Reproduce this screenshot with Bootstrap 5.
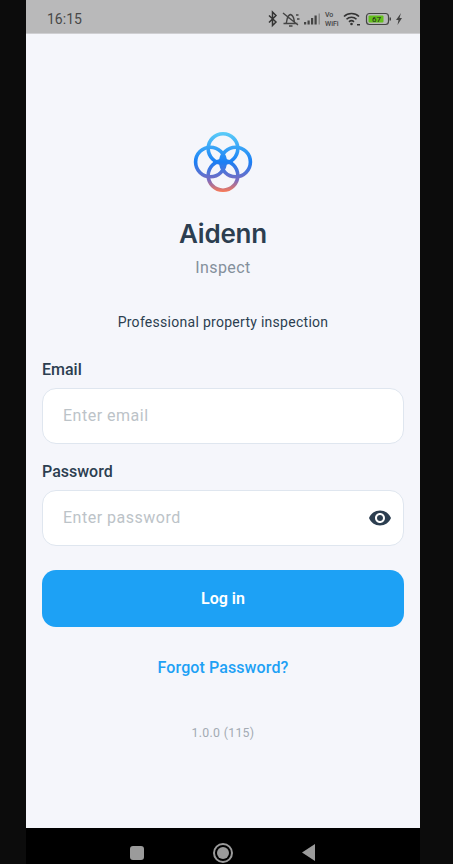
<!DOCTYPE html>
<html lang="en">
<head>
    <meta charset="UTF-8">
    <meta name="viewport" content="width=device-width, initial-scale=1.0">
    <title>Aidenn Inspect</title>
    <link href="https://cdn.jsdelivr.net/npm/bootstrap@5.3.0/dist/css/bootstrap.min.css" rel="stylesheet">
    <style>
        html, body { height: 100%; }
        body { background: #0c0c0c; font-family: Roboto, "Liberation Sans", sans-serif; overflow: hidden; }
        .phone { width: 394px; height: 864px; margin-left: 26px; }
        .status-strip { height: 34px; background: #b9b9ba; color: #484848; padding: 5px 18px 0 21px; font-size: 14px; border-bottom: 1px solid #cfcfd2; }
        .screen { height: 794px; background: #f5f6fb; padding: 98px 16px 0; color: #2c3e50; }
        .brand-mark { filter: blur(.4px); }
        .brand { font-family: Inter, sans-serif; font-size: 26px; font-weight: 600; line-height: 32px; margin-top: 26px; letter-spacing: -.2px; }
        .sub-brand { font-size: 16px; color: #84909b; line-height: 20px; margin-top: 8px; letter-spacing: .4px; }
        .tagline { font-size: 14px; line-height: 20px; margin-top: 34px; letter-spacing: .28px; }
        .login-form { margin-top: 28px; }
        .field-label { font-size: 16px; font-weight: 500; line-height: 20px; margin-bottom: 8px; display: block; }
        .field-box { height: 56px; border-radius: 14px; border: 1.5px solid #dfe6ef; background: #fff; color: #2c3e50; font-size: 16px; padding: 0 0 2px 20px; letter-spacing: .5px; box-shadow: none; }
        .field-box::placeholder { color: #bcc3c8; opacity: 1; }
        .pass-label { margin-top: 18px; }
        .eye-btn { right: 12px; top: 16px; line-height: 0; }
        .login-btn { height: 57px; background: #1da1f5; border: 0; border-radius: 14px; font-size: 16px; font-weight: 600; }
        .forgot { color: #1da1f5; font-size: 16px; font-weight: 500; line-height: 20px; margin-top: 31px; letter-spacing: .1px; }
        .version { color: #a3abb3; font-size: 12.3px; line-height: 16px; margin-top: 47px; letter-spacing: .3px; }
        .nav-strip { height: 36px; background: #000; padding-top: 15px; }
    </style>
</head>

<body>
<div class="phone">
    <div class="status-strip d-flex align-items-center justify-content-between">
        <span>16:15</span>
        <svg width="134" height="18" viewBox="0 -1 134 18" fill="none">
            <path d="M1 4.500l7 6.500-3.500 3.500V1l3.500 3.500L1 11.500" stroke="#333" stroke-width="1.500"/>
            <g stroke="#444" stroke-width="1.400">
                <path d="M15.500 12.500h14M18 12.500c1.500-2 0-7.500 4.500-9 4.500 1.500 3 7 4.500 9M21 15h3.500M15 2l15 12"/>
                <path d="M28 4h2.500M29 8h2.500"/>
            </g>
            <g fill="#444">
                <rect x="36" y="11" width="2.200" height="2.500"/>
                <rect x="39.500" y="9.500" width="2.200" height="4"/>
                <rect x="43" y="7" width="2.200" height="6.500"/>
                <rect x="46.500" y="4.500" width="2.200" height="9"/>
                <rect x="50.500" y="2.500" width="1.500" height="11" fill="#8a8a8a"/>
            </g>
            <text x="57" y="5.500" font-size="7" font-weight="500" fill="#444" font-family="Roboto, sans-serif">Vo</text>
            <text x="57" y="14.500" font-size="7" font-weight="500" fill="#444" font-family="Roboto, sans-serif">WiFi</text>
            <g fill="none" stroke="#333" stroke-width="1.600">
                <path d="M76 5.500c4-4 11-4 15 0"/>
                <path d="M78.500 8.200c2.700-2.700 7.300-2.700 10 0"/>
                <path d="M81 10.800c1.500-1.400 3.500-1.400 5 0"/>
            </g>
            <circle cx="83.500" cy="13" r="1.300" fill="#333"/>
            <rect x="89" y="13" width="3" height="1.500" fill="#333"/>
            <rect x="98.500" y="2.500" width="22" height="11" rx="3" stroke="#444" stroke-width="1.200"/>
            <rect x="100.500" y="4.500" width="15" height="7" rx="1" fill="#64c01c"/>
            <text x="104" y="11" font-size="8" fill="#222" font-family="Roboto, sans-serif">67</text>
            <rect x="121.500" y="6.500" width="1.500" height="3" fill="#444"/>
            <path d="M133 2l-5 7h2.500l-1 5 4.500-7h-2.500z" fill="#444"/>
        </svg>
    </div>

    <div class="screen d-flex flex-column">
        <div class="text-center">
            <svg class="brand-mark" width="60" height="60" viewBox="0 0 60 60" fill="none">
                <defs>
                    <linearGradient id="ringGrad" x1="0" y1="0" x2="0" y2="60" gradientUnits="userSpaceOnUse">
                        <stop offset="0" stop-color="#5ccdf8"/>
                        <stop offset=".5" stop-color="#1a7ff5"/>
                        <stop offset=".8" stop-color="#7a6bc0"/>
                        <stop offset="1" stop-color="#fb7a55"/>
                    </linearGradient>
                </defs>
                <g stroke="url(#ringGrad)" stroke-width="3.600">
                    <circle cx="30" cy="16.600" r="14.800"/>
                    <circle cx="30" cy="43.400" r="14.800"/>
                    <circle cx="17.400" cy="30" r="14.800"/>
                    <circle cx="42.600" cy="30" r="14.800"/>
                </g>
            </svg>
            <div class="brand">Aidenn</div>
            <div class="sub-brand">Inspect</div>
            <div class="tagline">Professional property inspection</div>
        </div>

        <form class="login-form">
            <label class="field-label" for="email">Email</label>
            <input type="email" class="form-control field-box" id="email" placeholder="Enter email">
            <label class="field-label pass-label" for="password">Password</label>
            <div class="position-relative">
                <input type="password" class="form-control field-box" id="password" placeholder="Enter password">
                <span class="eye-btn position-absolute">
                    <svg width="24" height="24" viewBox="0 0 24 24" fill="#2c3e50"><path d="M12 4.500C7 4.500 2.700 7.600 1 12c1.700 4.400 6 7.500 11 7.500s9.300-3.100 11-7.500c-1.700-4.400-6-7.500-11-7.500zM12 17c-2.800 0-5-2.200-5-5s2.200-5 5-5 5 2.200 5 5-2.200 5-5 5zm0-8c-1.700 0-3 1.300-3 3s1.300 3 3 3 3-1.300 3-3-1.300-3-3-3z"/></svg>
                </span>
            </div>
            <button type="button" class="btn btn-primary w-100 login-btn mt-4">Log in</button>
        </form>

        <div class="forgot text-center">Forgot Password?</div>
        <div class="version text-center">1.0.0 (115)</div>
    </div>

    <div class="nav-strip d-flex justify-content-center align-items-start">
        <svg width="200" height="20" viewBox="0 0 200 20">
            <rect x="7" y="3" width="14" height="14" rx="3" fill="#9b9b9b"/>
            <circle cx="100" cy="10" r="9" fill="none" stroke="#9b9b9b" stroke-width="2"/>
            <circle cx="100" cy="10" r="6" fill="#9b9b9b"/>
            <path d="M192 1v17L179 9.500z" fill="#9b9b9b"/>
        </svg>
    </div>
</div>

<script src="https://cdn.jsdelivr.net/npm/bootstrap@5.3.0/dist/js/bootstrap.bundle.min.js"></script>
</body>
</html>
